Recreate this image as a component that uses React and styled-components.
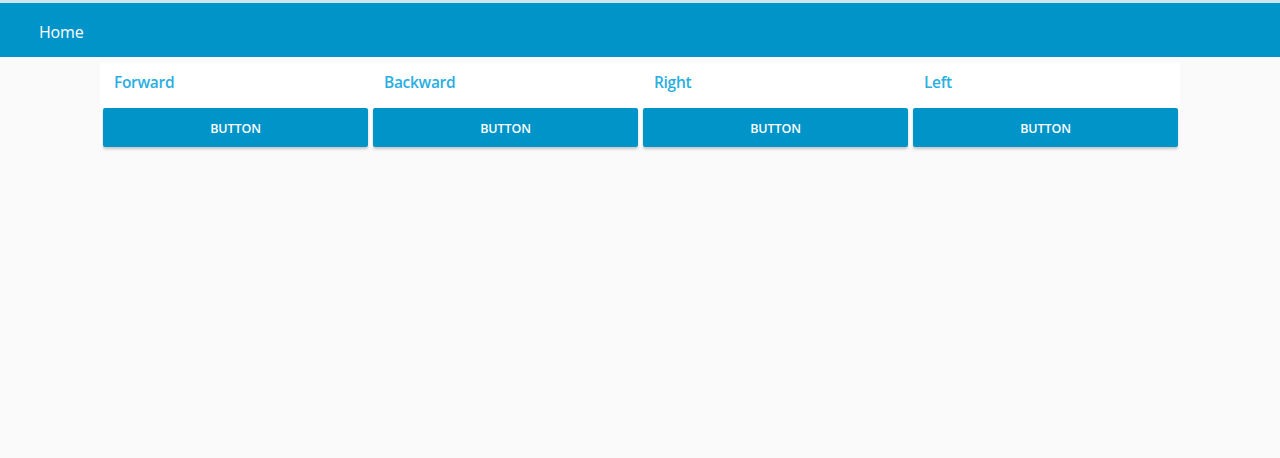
import React from "react";
import styled, { createGlobalStyle } from "styled-components";

const Global = createGlobalStyle`
  html, body { margin: 0; padding: 0; background: #fafafa; }
  body { font-family: "Open Sans", "Noto Sans", sans-serif; }
  #root { min-height: 458px; background: #fafafa; }
`;

const Page = styled.div`
  min-height: 458px;
  background: #fafafa;
  border-top: 3px solid #cfe6ee;
`;

const Toolbar = styled.header`
  height: 54px;
  box-sizing: border-box;
  padding: 3px 0 0 39px;
  background: #0094c9;
  display: flex;
  align-items: center;
  color: #fff;
  font-size: 16px;
  letter-spacing: -0.2px;
`;

const Grid = styled.main`
  width: 1080px;
  margin: 5px auto 0;
  display: grid;
  grid-template-columns: repeat(4, 1fr);
`;

const Card = styled.section`
  background: #fff;
  padding: 0 2px 0 3px;
`;

const Title = styled.h2`
  margin: 0;
  height: 46px;
  line-height: 40px;
  padding-left: 11px;
  font-size: 15.5px;
  font-weight: 600;
  color: #2aaee2;
  letter-spacing: -0.3px;
`;

const Button = styled.button`
  display: block;
  width: 100%;
  height: 39px;
  border: none;
  border-radius: 2px;
  background: #0094c9;
  color: #fff;
  font-family: inherit;
  font-size: 12.5px;
  font-weight: 600;
  letter-spacing: -0.1px;
  padding-top: 2px;
  box-shadow: 0 2px 3px rgba(0, 0, 0, 0.22);
  cursor: pointer;
`;

const items = ["Forward", "Backward", "Right", "Left"];

export default function App() {
  return (
    <>
      <Global />
      <Page>
        <Toolbar>Home</Toolbar>
        <Grid>
          {items.map((t) => (
            <Card key={t}>
              <Title>{t}</Title>
              <Button>BUTTON</Button>
            </Card>
          ))}
        </Grid>
      </Page>
    </>
  );
}
